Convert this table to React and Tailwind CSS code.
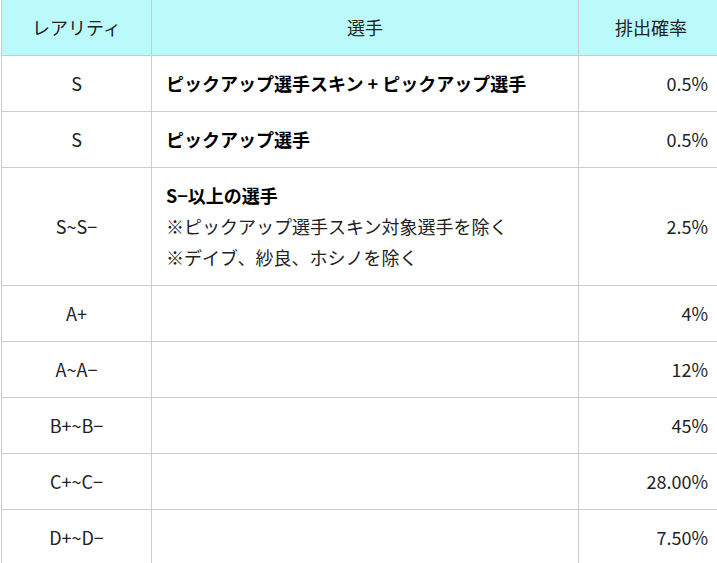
export default function App() {
  const rows = [
    { r: "S", p: [{ t: "ピックアップ選手スキン + ピックアップ選手", b: true }], v: "0.5%" },
    { r: "S", p: [{ t: "ピックアップ選手", b: true }], v: "0.5%" },
    {
      r: "S~S−",
      p: [
        { t: "S−以上の選手", b: true },
        { t: "※ピックアップ選手スキン対象選手を除く" },
        { t: "※デイブ、紗良、ホシノを除く" },
      ],
      v: "2.5%",
    },
    { r: "A+", p: [], v: "4%" },
    { r: "A~A−", p: [], v: "12%" },
    { r: "B+~B−", p: [], v: "45%" },
    { r: "C+~C−", p: [], v: "28.00%" },
    { r: "D+~D−", p: [], v: "7.50%" },
  ];
  return (
    <div
      className="w-[717px] h-[563px] overflow-hidden bg-white pl-px text-[18px] text-[#222]"
      style={{ fontFamily: '"Noto Sans CJK JP", "Noto Sans", sans-serif' }}
    >
      <div className="w-[722px] border-l border-[#cccccc]">
        <div className="flex bg-[#bbfafa] border-b border-[#cccccc] h-[56px]">
          <div className="w-[150px] border-r border-[#cccccc] flex items-center justify-center">レアリティ</div>
          <div className="w-[427px] border-r border-[#cccccc] flex items-center justify-center">選手</div>
          <div className="flex-1 flex items-center justify-center">排出確率</div>
        </div>
        {rows.map((row, i) => (
          <div key={i} className="flex border-b border-[#cccccc]">
            <div className="w-[150px] border-r border-[#cccccc] flex items-center justify-center py-3 leading-[31px]">
              {row.r}
            </div>
            <div className="w-[427px] border-r border-[#cccccc] py-3 pl-[14px] leading-[31px] min-h-[55px]">
              {row.p.map((l, j) => (
                <div key={j} className={l.b ? "font-bold text-black" : ""}>
                  {l.t}
                </div>
              ))}
            </div>
            <div className="flex-1 flex items-center justify-end pr-[15px] py-3 leading-[31px]">
              {row.v}
            </div>
          </div>
        ))}
      </div>
    </div>
  );
}
